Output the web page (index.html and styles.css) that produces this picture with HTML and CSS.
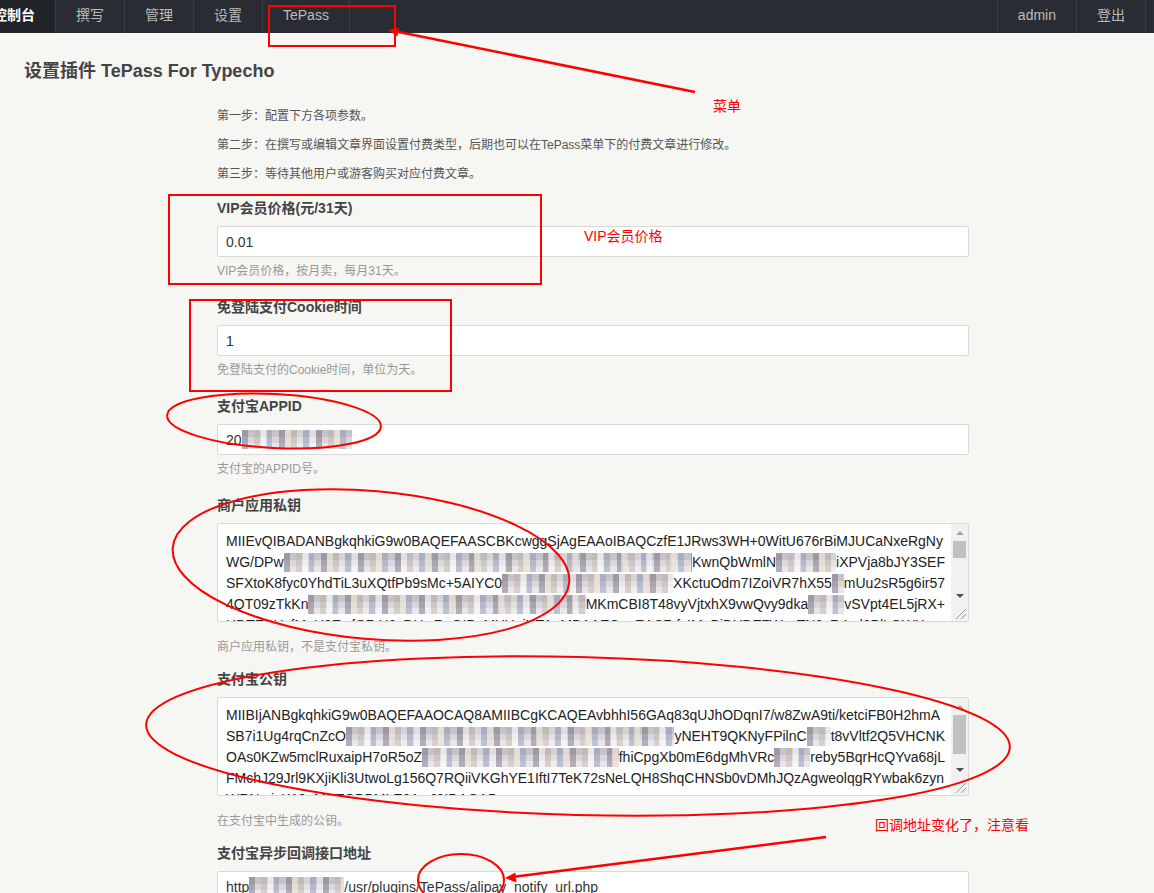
FILE: index.html
```html
<!DOCTYPE html>
<html lang="zh-CN">
<head>
<meta charset="utf-8">
<title>设置插件 TePass For Typecho</title>
<link rel="stylesheet" href="styles.css">
</head>
<body>
<header class="nav">
  <ul class="nav-left">
    <li class="active">控制台</li>
    <li>撰写</li>
    <li>管理</li>
    <li>设置</li>
    <li>TePass</li>
  </ul>
  <ul class="nav-right">
    <li>admin</li>
    <li>登出</li>
  </ul>
</header>

<main class="page">
  <h2 class="page-title">设置插件 TePass For Typecho</h2>
  <div class="form-col">
    <div class="steps">
      <p>第一步：配置下方各项参数。</p>
      <p>第二步：在撰写或编辑文章界面设置付费类型，后期也可以在TePass菜单下的付费文章进行修改。</p>
      <p>第三步：等待其他用户或游客购买对应付费文章。</p>
    </div>

    <div class="field">
      <label>VIP会员价格(元/31天)</label>
      <div class="input">0.01</div>
      <p class="desc">VIP会员价格，按月卖，每月31天。</p>
    </div>

    <div class="field">
      <label>免登陆支付Cookie时间</label>
      <div class="input">1</div>
      <p class="desc">免登陆支付的Cookie时间，单位为天。</p>
    </div>

    <div class="field">
      <label>支付宝APPID</label>
      <div class="input"><span>20</span><span class="mz w110"></span></div>
      <p class="desc">支付宝的APPID号。</p>
    </div>

    <div class="field ta">
      <label>商户应用私钥</label>
      <div class="ta-box">
        <div class="ta-text">
          <div class="ta-line"><span>MIIEvQIBADANBgkqhkiG9w0BAQEFAASCBKcwggSjAgEAAoIBAQCzfE1JRws3WH+0WitU676rBiMJUCaNxeRgNy</span></div>
          <div class="ta-line"><span>WG/DPw</span><span class="mz grow"></span><span>KwnQbWmlN</span><span class="mz w60"></span><span>iXPVja8bJY3SEF</span></div>
          <div class="ta-line"><span>SFXtoK8fyc0YhdTiL3uXQtfPb9sMc+5AIYC0</span><span class="mz grow"></span><span>XKctuOdm7IZoiVR7hX55</span><span class="mz w12"></span><span>mUu2sR5g6ir57</span></div>
          <div class="ta-line"><span>4QT09zTkKn</span><span class="mz grow"></span><span>MKmCBI8T48vyVjtxhX9vwQvy9dka</span><span class="mz w36"></span><span>vSVpt4EL5jRX+</span></div>
          <div class="ta-line"><span>UDTEBHyfMeU9EwfQ7rH2cDHwRuOIPnMYHeiUTAaMBAAECggEAC7rfvIMpBiDYDE7WysTN3sR4xd6PlLQWX</span></div>
        </div>
        <div class="sb">
          <div class="sb-btn"><i class="tri-up"></i></div>
          <div class="sb-track"><div class="sb-thumb"></div></div>
          <div class="sb-btn"><i class="tri-down"></i></div>
          <div class="sb-corner">
            <svg width="17" height="17" viewBox="0 0 17 17"><path d="M5 15 L15 5 M10 15 L15 10" stroke="#9a9a9a" stroke-width="1" fill="none"/></svg>
          </div>
        </div>
      </div>
      <p class="desc">商户应用私钥，不是支付宝私钥。</p>
    </div>

    <div class="field ta">
      <label>支付宝公钥</label>
      <div class="ta-box">
        <div class="ta-text">
          <div class="ta-line"><span>MIIBIjANBgkqhkiG9w0BAQEFAAOCAQ8AMIIBCgKCAQEAvbhhI56GAq83qUJhODqnI7/w8ZwA9ti/ketciFB0H2hmA</span></div>
          <div class="ta-line"><span>SB7i1Ug4rqCnZcO</span><span class="mz grow"></span><span>yNEHT9QKNyFPilnC</span><span class="mz w24"></span><span>t8vVltf2Q5VHCNK</span></div>
          <div class="ta-line"><span>OAs0KZw5mclRuxaipH7oR5oZ</span><span class="mz grow"></span><span>fhiCpgXb0mE6dgMhVRc</span><span class="mz w36"></span><span>reby5BqrHcQYva68jL</span></div>
          <div class="ta-line"><span>FMchJ29Jrl9KXjiKli3UtwoLg156Q7RQiiVKGhYE1IftI7TeK72sNeLQH8ShqCHNSb0vDMhJQzAgweolqgRYwbak6zyn</span></div>
          <div class="ta-line"><span>WRNcrivK13oMwTQBBMLE2AwJ3IDAQAB</span></div>
        </div>
        <div class="sb">
          <div class="sb-btn"><i class="tri-up"></i></div>
          <div class="sb-track"><div class="sb-thumb tall"></div></div>
          <div class="sb-btn"><i class="tri-down"></i></div>
          <div class="sb-corner">
            <svg width="17" height="17" viewBox="0 0 17 17"><path d="M5 15 L15 5 M10 15 L15 10" stroke="#9a9a9a" stroke-width="1" fill="none"/></svg>
          </div>
        </div>
      </div>
      <p class="desc">在支付宝中生成的公钥。</p>
    </div>

    <div class="field">
      <label>支付宝异步回调接口地址</label>
      <div class="input"><span>http</span><span class="mz w95"></span><span>/usr/plugins/TePass/alipay_notify_url.php</span></div>
    </div>
  </div>
</main>

<svg class="annot" width="1154" height="893" viewBox="0 0 1154 893">
  <g fill="none" stroke="#ff0000" stroke-width="2">
    <rect x="269" y="6" width="126" height="40"/>
    <rect x="169" y="195" width="372" height="89"/>
    <rect x="190" y="300" width="261" height="91"/>
    <ellipse cx="274" cy="421" rx="107" ry="27" transform="rotate(3 274 421)"/>
    <ellipse cx="371" cy="565" rx="199" ry="74" transform="rotate(5 371 565)"/>
    <ellipse cx="578" cy="736" rx="432" ry="79" transform="rotate(1.5 578 736)"/>
    <ellipse cx="461" cy="880" rx="43" ry="26"/>
    <line x1="695" y1="92" x2="394" y2="31" stroke-width="2.5"/>
    <line x1="826" y1="837" x2="512" y2="877" stroke-width="2.5"/>
  </g>
  <g fill="#ff0000">
    <polygon points="388,30 399,27.6 397.3,36.4"/>
    <polygon points="505,878 516.5,882.5 515.3,872.5"/>
  </g>
  <g class="annot-text" fill="#ff0000">
    <text x="713" y="111">菜单</text>
    <text x="584" y="241">VIP会员价格</text>
    <text x="875" y="830">回调地址变化了，注意看</text>
  </g>
</svg>
</body>
</html>
```

FILE: styles.css
```css
html, body {
  height: 100%;
  overflow: hidden;
}

body {
  margin: 0;
  position: relative;
  background: #f6f6f3;
  font-family: "Liberation Sans", Arial, "Noto Sans CJK SC", sans-serif;
  color: #444;
}

/* ---------- top navigation ---------- */
.nav {
  display: flex;
  justify-content: space-between;
  height: 33px;
  background: #292d33;
}

.nav ul {
  display: flex;
  list-style: none;
  padding: 0;
}

.nav li {
  height: 33px;
  line-height: 30px;
  padding: 0 20px;
  font-size: 14px;
  color: #bbb;
  white-space: nowrap;
}

.nav-left {
  margin: 0 0 0 -27px;
}

.nav-left li {
  border-right: 1px solid #383d45;
}

.nav-left li.active {
  background: #202328;
  color: #fff;
  font-weight: bold;
}

.nav-right {
  margin: 0 8px 0 0;
}

.nav-right li {
  border-left: 1px solid #383d45;
}

.nav-right li:last-child {
  border-right: 1px solid #383d45;
}

/* ---------- page ---------- */
.page-title {
  margin: 26px 0 0 24px;
  font-size: 18px;
  line-height: 24px;
  font-weight: bold;
  color: #444;
}

.form-col {
  margin-left: 217px;
  width: 752px;
}

.steps {
  margin: 25px 0 15px;
}

.steps p {
  margin: 0 0 12px;
  font-size: 12px;
  line-height: 17px;
  color: #555;
}

.steps p:last-child {
  margin-bottom: 0;
}

.field {
  margin-bottom: 17px;
}

.field label {
  display: block;
  font-size: 14px;
  font-weight: bold;
  line-height: 20px;
  margin-bottom: 8px;
  color: #444;
}

.input {
  box-sizing: border-box;
  height: 31px;
  border: 1px solid #d9d9d6;
  border-radius: 2px;
  background: #fff;
  padding: 0 8px;
  display: flex;
  align-items: center;
  font-size: 14px;
  color: #333;
  white-space: nowrap;
}

.desc {
  margin: 6px 0 0;
  font-size: 12px;
  line-height: 17px;
  color: #999;
}

.field.ta {
  margin-bottom: 13px;
}

.field.ta .desc {
  margin-top: 17px;
}

/* ---------- textarea look ---------- */
.ta-box {
  box-sizing: border-box;
  height: 99px;
  display: flex;
  border: 1px solid #d9d9d6;
  border-radius: 2px;
  background: #fff;
}

.ta-text {
  flex: 1;
  min-width: 0;
  overflow: hidden;
  padding: 6.5px 6px 0 8px;
  font-size: 14px;
  line-height: 21px;
  color: #222;
}

.ta-line {
  display: flex;
  align-items: center;
  height: 21px;
  white-space: nowrap;
}

.sb {
  width: 17px;
  flex: none;
  display: flex;
  flex-direction: column;
  background: #f1f1f1;
}

.sb-btn {
  height: 17px;
  display: flex;
  align-items: center;
  justify-content: center;
}

.tri-up {
  width: 0;
  height: 0;
  border-left: 4px solid transparent;
  border-right: 4px solid transparent;
  border-bottom: 4px solid #a3a3a3;
}

.tri-down {
  width: 0;
  height: 0;
  border-left: 4px solid transparent;
  border-right: 4px solid transparent;
  border-top: 4px solid #505050;
}

.sb-track {
  flex: 1;
  padding: 0 2px;
}

.sb-thumb {
  height: 17px;
  background: #c1c1c1;
}

.sb-thumb.tall {
  height: 39px;
}

.sb-corner {
  height: 17px;
  background: #f1f1f1;
}

.sb-corner svg {
  display: block;
}

/* ---------- pixelated (redacted) blocks ---------- */
.mz {
  display: inline-block;
  flex: none;
  height: 19px;
  background-color: #d9d6dc;
  background-image:
    repeating-linear-gradient(90deg, transparent 0 19px, rgba(255, 255, 255, 0.45) 19px 25px, transparent 25px 43px, rgba(235, 225, 210, 0.7) 43px 49px),
    repeating-linear-gradient(90deg, rgba(100, 96, 112, 0.42) 0 6px, transparent 6px 12px, rgba(185, 170, 155, 0.38) 12px 18px, rgba(255, 255, 255, 0.25) 18px 24px, rgba(125, 140, 175, 0.4) 24px 30px, transparent 30px 37px),
    repeating-linear-gradient(0deg, rgba(255, 255, 255, 0.4) 0 6px, transparent 6px 12px, rgba(110, 105, 115, 0.18) 12px 19px);
}

.mz.grow { flex: 1; }
.mz.w12 { width: 12px; }
.mz.w24 { width: 24px; }
.mz.w36 { width: 36px; }
.mz.w60 { width: 60px; }
.mz.w95 { width: 95px; }
.mz.w110 { width: 110px; }

/* ---------- red annotations ---------- */
.annot {
  position: absolute;
  top: 0;
  left: 0;
  pointer-events: none;
}

.annot-text {
  font-family: "Liberation Sans", Arial, "Noto Sans CJK SC", sans-serif;
  font-size: 14px;
}
```
